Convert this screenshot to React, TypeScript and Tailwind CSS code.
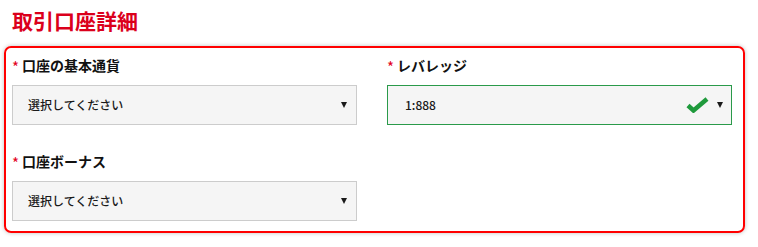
import { ReactNode } from 'react';

const FONT = "font-['Noto_Sans_CJK_JP','Noto_Sans',sans-serif]";

function Label({ children }: { children: ReactNode }) {
  return (
    <div className="flex items-center h-5 mb-[10px]">
      <span className="text-[#e3001b] text-[15px] w-[10px] leading-none mt-[3px]">*</span>
      <span className="text-[14px] font-bold text-[#111]">{children}</span>
    </div>
  );
}

function Caret() {
  return <span className="w-0 h-0 border-l-[3px] border-r-[3px] border-t-[6px] border-l-transparent border-r-transparent border-t-[#1a1a1a]" />;
}

function SelectBox({ value, valid }: { value: string; valid?: boolean }) {
  return (
    <div
      className={
        'h-10 flex items-center justify-between bg-[#f5f5f5] border ' +
        (valid ? 'border-[#2a9a4a] pl-[17px] pr-[8px]' : 'border-[#cccccc] pl-[15px] pr-[9px]')
      }
    >
      <span className="text-[12px] font-medium text-[#1a1a1a]">{value}</span>
      <div className="flex items-center gap-[8px]">
        {valid && (
          <svg width="23" height="16" viewBox="0 0 23 16">
            <path d="M2 8.5 L7.5 13.5 L21 2" fill="none" stroke="#1f9a3c" strokeWidth="4.5" strokeLinejoin="miter" strokeLinecap="butt" />
          </svg>
        )}
        <Caret />
      </div>
    </div>
  );
}

export default function App() {
  return (
    <div className={`${FONT} w-[758px] h-[247px] bg-white`}>
      <h1 className="pl-3 pt-[5px] text-[21px] leading-[31px] font-bold text-[#db001b]">取引口座詳細</h1>
      <div className="mt-[10px] ml-1 w-[741px] border-2 border-[#ff0000] rounded-[7px] shadow-[0_0_4px_rgba(0,0,0,0.25)] pl-[6px] pr-[10px] pt-[7px] pb-[10px]">
        <div className="grid grid-cols-[345px_345px] gap-x-[30px]">
          <div>
            <Label>口座の基本通貨</Label>
            <SelectBox value="選択してください" />
          </div>
          <div>
            <Label>レバレッジ</Label>
            <SelectBox value="1:888" valid />
          </div>
          <div className="mt-[26px]">
            <Label>口座ボーナス</Label>
            <SelectBox value="選択してください" />
          </div>
        </div>
      </div>
    </div>
  );
}
